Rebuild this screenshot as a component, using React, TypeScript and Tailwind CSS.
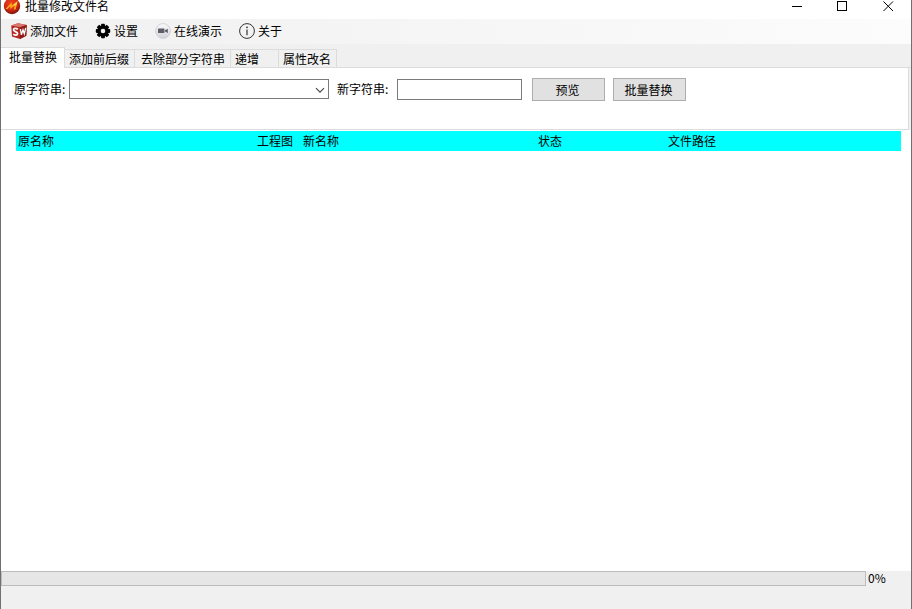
import { useState } from 'react';
import clsx from 'clsx';

const tabs = [
  { label: '批量替换', width: 'w-[64px] pl-2' },
  { label: '添加前后缀', width: 'w-[70px] pl-1' },
  { label: '去除部分字符串', width: 'w-[96px] pl-1.5' },
  { label: '递增', width: 'w-[48px] pl-1' },
  { label: '属性改名', width: 'w-[58px] pl-1' },
];

const columns = [
  { label: '原名称', width: 'w-[239px]' },
  { label: '工程图', width: 'w-[46px]' },
  { label: '新名称', width: 'w-[235px]' },
  { label: '状态', width: 'w-[130px]' },
  { label: '文件路径', width: 'w-auto' },
];

function AppLogo() {
  return (
    <svg width="18" height="18" viewBox="0 0 18 18" aria-hidden="true">
      <defs>
        <radialGradient id="logo" cx="0.45" cy="0.35" r="0.65">
          <stop offset="0" stopColor="#f2451c" />
          <stop offset="0.6" stopColor="#d42a14" />
          <stop offset="1" stopColor="#7c150c" />
        </radialGradient>
      </defs>
      <circle cx="9" cy="9" r="8.2" fill="url(#logo)" />
      <path d="M2.5 12 L8.5 5.5 L9 8.8 L14.5 4.2 L12.5 12.5 L10.8 12.5 L11.6 8.4 L7.5 12 L7.2 9 L4.6 12 Z" fill="#ffa81c" />
      <path d="M9 8.8 L14.5 4.2 L13.6 7.8 Z" fill="#ffd84a" />
    </svg>
  );
}

function CubeIcon() {
  return (
    <svg width="16" height="16" viewBox="0 0 16 16" aria-hidden="true">
      <path d="M0.3 2.5 L7 0.3 L15.7 2 L15.3 12.8 L9 15.9 L1 13.5 Z" fill="#b32621" />
      <path d="M0.3 2.5 L7 0.3 L15.7 2 L9 4.2 Z" fill="#d9776c" />
      <path d="M9 4.2 L15.7 2 L15.3 12.8 L9 15.9 Z" fill="#8d1a17" />
      <path d="M6.9 6.2 C4.8 4.8 2.4 5 2.5 6.9 C2.6 8.7 6.7 8.6 6.6 10.7 C6.5 12.7 3.8 12.3 2.2 11.1" fill="none" stroke="#fff" strokeWidth="1.7" />
      <path d="M9.4 6 L10.4 11.8 L12 6.8 L13.3 10.8 L14.7 4.8" fill="none" stroke="#fff" strokeWidth="1.3" />
    </svg>
  );
}

function GearIcon() {
  return (
    <svg width="16" height="16" viewBox="0 0 16 16" aria-hidden="true">
      <g fill="#000">
        <rect x="6.1" y="0.8" width="3.8" height="14.4" rx="0.8" />
        <rect x="6.1" y="0.8" width="3.8" height="14.4" rx="0.8" transform="rotate(45 8 8)" />
        <rect x="6.1" y="0.8" width="3.8" height="14.4" rx="0.8" transform="rotate(90 8 8)" />
        <rect x="6.1" y="0.8" width="3.8" height="14.4" rx="0.8" transform="rotate(135 8 8)" />
        <circle cx="8" cy="8" r="5.8" />
      </g>
      <circle cx="8" cy="8" r="2.3" fill="#f2f2f2" />
    </svg>
  );
}

function CameraIcon() {
  return (
    <svg width="16" height="16" viewBox="0 0 16 16" aria-hidden="true">
      <defs>
        <linearGradient id="disc" x1="0" y1="0" x2="0" y2="1">
          <stop offset="0" stopColor="#fafafc" />
          <stop offset="1" stopColor="#d2d2da" />
        </linearGradient>
      </defs>
      <circle cx="8" cy="8" r="7.4" fill="url(#disc)" stroke="#cbcbd2" strokeWidth="0.8" />
      <rect x="3" y="5.6" width="6.4" height="4.4" rx="0.6" fill="#5e5e66" />
      <path d="M9.9 7.2 L12.8 5.8 L12.8 10 L9.9 8.6 Z" fill="#5e5e66" />
    </svg>
  );
}

function InfoIcon() {
  return (
    <svg width="16" height="16" viewBox="0 0 16 16" aria-hidden="true">
      <circle cx="8" cy="8" r="7.4" fill="none" stroke="#333" strokeWidth="1" />
      <circle cx="8" cy="4.3" r="0.9" fill="#333" />
      <path d="M8 6.4 V12.2" stroke="#333" strokeWidth="1.2" />
    </svg>
  );
}

function TitleBar() {
  return (
    <header className="flex h-[19px] items-start justify-between bg-white">
      <div className="flex h-3 items-center gap-1 pl-0.5">
        <AppLogo />
        <h1 className="leading-3">批量修改文件名</h1>
      </div>
      <div className="flex">
        <button aria-label="最小化" className="flex w-[46px] justify-center">
          <svg width="11" height="12" viewBox="0 0 11 12"><path d="M0 6.5 H10" stroke="#000" /></svg>
        </button>
        <button aria-label="最大化" className="flex w-[45px] justify-center">
          <svg width="11" height="12" viewBox="0 0 11 12"><rect x="0.5" y="1.5" width="9" height="9" fill="none" stroke="#000" /></svg>
        </button>
        <button aria-label="关闭" className="flex w-[46px] justify-center">
          <svg width="11" height="12" viewBox="0 0 11 12"><path d="M0.5 1.5 L10 11 M10 1.5 L0.5 11" stroke="#000" /></svg>
        </button>
      </div>
    </header>
  );
}

function Toolbar() {
  return (
    <nav className="flex h-[25px] items-start gap-[17px] bg-linear-to-r from-[#f0f0f0] to-[#fcfcfc] pt-1 pl-2.5">
      <button className="flex items-center gap-[3px]"><CubeIcon />添加文件</button>
      <button className="flex items-center gap-[3px]"><GearIcon />设置</button>
      <button className="flex items-center gap-[3px]"><CameraIcon />在线演示</button>
      <button className="flex items-center gap-[3px]"><InfoIcon />关于</button>
    </nav>
  );
}

export default function App() {
  const [active, setActive] = useState(0);
  const [source, setSource] = useState('');
  const [target, setTarget] = useState('');
  const progress = 0;

  return (
    <div className="flex min-h-screen flex-col border-x border-[#707070] bg-[#f0f0f0] font-['Noto_Sans_CJK_SC',sans-serif] text-[12px] leading-4 text-black">
      <TitleBar />
      <Toolbar />

      <div role="tablist" className="flex h-6 items-end">
        {tabs.map((tab, i) => (
          <button
            key={tab.label}
            role="tab"
            aria-selected={i === active}
            onClick={() => setActive(i)}
            className={clsx(
              'border-r border-t border-[#dcdcdc] text-left whitespace-nowrap',
              tab.width,
              i === active ? 'h-[21px] bg-white pb-0.5' : 'h-[19px] border-b bg-[#f0f0f0]'
            )}
          >
            {tab.label}
          </button>
        ))}
        <div className="grow self-stretch border-b border-[#dcdcdc]" />
      </div>

      <section className="mr-0.5 flex h-[62px] items-start border-r border-b border-[#dcdcdc] bg-white pt-2.5 pl-[13px]">
        <label htmlFor="source" className="mt-[3px] w-[55px] whitespace-nowrap">原字符串:</label>
        <div className="relative mt-px">
          <select
            id="source"
            value={source}
            onChange={(e) => setSource(e.target.value)}
            className="block h-5 w-[260px] appearance-none border border-[#7a7a7a] bg-white px-1"
          >
            <option value=""></option>
          </select>
          <svg className="pointer-events-none absolute top-2 right-1" width="10" height="7" viewBox="0 0 10 7">
            <path d="M1 1.2 L5 5.2 L9 1.2" fill="none" stroke="#444" strokeWidth="1.1" />
          </svg>
        </div>
        <label htmlFor="target" className="mt-[3px] ml-2 w-[60px] whitespace-nowrap">新字符串:</label>
        <input
          id="target"
          value={target}
          onChange={(e) => setTarget(e.target.value)}
          className="mt-px h-[21px] w-[125px] border border-[#7a7a7a] bg-white px-1"
        />
        <button className="ml-2.5 h-[23px] w-[73px] border border-[#adadad] bg-[#e1e1e1] pr-0.5">预览</button>
        <button className="ml-2 h-[23px] w-[73px] border border-[#adadad] bg-[#e1e1e1] pr-0.5">批量替换</button>
      </section>

      <main className="grow bg-white pt-px pr-2.5 pl-[15px]">
        <table className="w-full table-fixed border-collapse">
          <thead>
            <tr className="h-5 bg-[#00ffff]">
              {columns.map((col) => (
                <th key={col.label} className={clsx('p-0 pl-0.5 text-left font-normal whitespace-nowrap', col.width)}>
                  {col.label}
                </th>
              ))}
            </tr>
          </thead>
          <tbody />
        </table>
      </main>

      <footer className="flex h-[38px] items-start">
        <div role="progressbar" aria-label="进度" aria-valuenow={progress} className="h-[15px] grow border border-[#bcbcbc] bg-[#e6e6e6]">
          <div className="h-full bg-[#06b025]" style={{ width: `${progress}%` }} />
        </div>
        <span className="w-[45px] pl-0.5 leading-[14px]">{progress}%</span>
      </footer>
    </div>
  );
}
